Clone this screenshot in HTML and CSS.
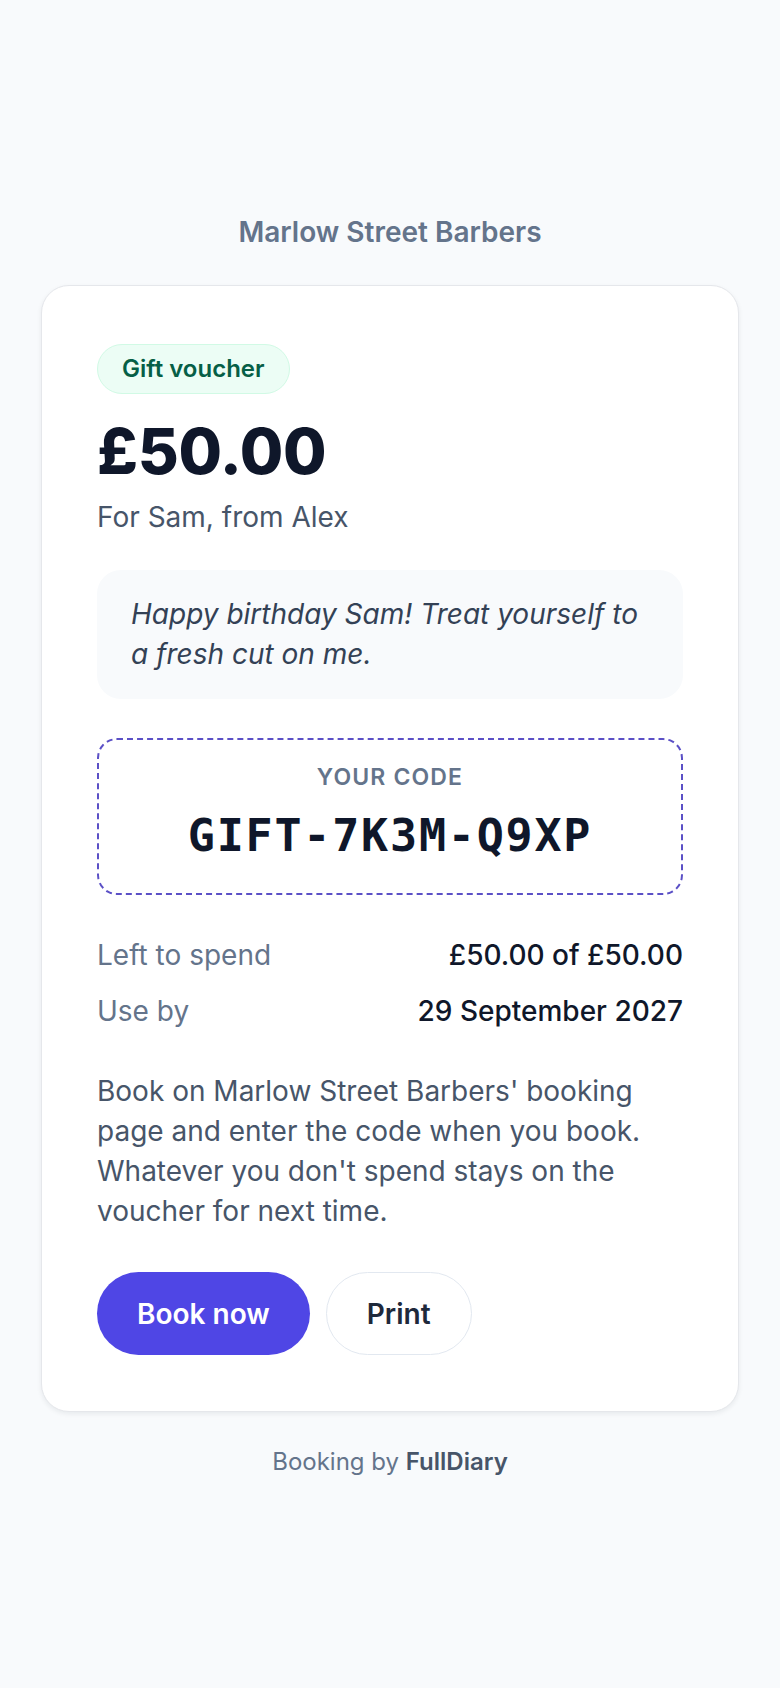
FILE: index.html
```html
<!DOCTYPE html>
<html lang="en">
<head>
<meta charset="utf-8">
<meta name="viewport" content="width=device-width, initial-scale=1">
<title>Gift voucher – Marlow Street Barbers</title>
<link rel="stylesheet" href="styles.css">
</head>
<body>
<main class="page">
  <header class="shop-name">Marlow Street Barbers</header>
  <section class="card">
    <span class="pill">Gift voucher</span>
    <h1 class="amount">£50.00</h1>
    <p class="for">For Sam, from Alex</p>
    <blockquote class="message">Happy birthday Sam! Treat yourself to a fresh cut on me.</blockquote>
    <div class="code-box">
      <div class="code-label">YOUR CODE</div>
      <div class="code">GIFT-7K3M-Q9XP</div>
    </div>
    <dl class="details">
      <div class="row"><dt>Left to spend</dt><dd>£50.00 of £50.00</dd></div>
      <div class="row"><dt>Use by</dt><dd>29 September 2027</dd></div>
    </dl>
    <p class="info">Book on Marlow Street Barbers' booking page and enter the code when you book. Whatever you don't spend stays on the voucher for next time.</p>
    <div class="actions">
      <a class="btn btn-primary" href="#">Book now</a>
      <a class="btn btn-secondary" href="#">Print</a>
    </div>
  </section>
  <footer class="footer">Booking by <strong>FullDiary</strong></footer>
</main>
</body>
</html>
```
FILE: styles.css
```css
* { box-sizing: border-box; }
html, body { margin: 0; padding: 0; }
body {
  background: #f8fafc;
  font-family: Inter, "Noto Sans", "Liberation Sans", sans-serif;
  color: #0f172a;
  -webkit-font-smoothing: antialiased;
}
.page {
  padding: 212px 41px 60px;
  display: flex;
  flex-direction: column;
}
.shop-name {
  text-align: center;
  font-size: 28px;
  line-height: 40px;
  font-weight: 600;
  color: #64748b;
  margin-bottom: 33px;
}
.card {
  background: #ffffff;
  border: 1.5px solid #e5e7eb;
  border-radius: 28px;
  box-shadow: 0 2px 5px rgba(15, 23, 42, 0.07);
  padding: 58px 55px 56px;
  display: flex;
  flex-direction: column;
  align-items: flex-start;
}
.pill {
  display: inline-block;
  background: #ecfdf5;
  border: 1.5px solid #d1fae5;
  color: #065f46;
  font-size: 24px;
  line-height: 30px;
  font-weight: 600;
  padding: 9px 24px;
  border-radius: 999px;
}
.amount {
  margin: 27px 0 0;
  font-size: 63px;
  line-height: 60px;
  font-weight: 800;
  letter-spacing: -0.005em;
  color: #0f172a;
}
.for {
  margin: 18px 0 0;
  font-size: 28px;
  line-height: 36px;
  color: #475569;
}
.message {
  align-self: stretch;
  margin: 35px 0 0;
  background: #f8fafc;
  border-radius: 24px;
  padding: 24px 34px 25px;
  font-style: italic;
  font-size: 28px;
  line-height: 40px;
  color: #334155;
}
.code-box {
  align-self: stretch;
  margin-top: 39px;
  border: 2px dashed #5b50c6;
  border-radius: 20px;
  padding: 22px 16px 30px;
  text-align: center;
}
.code-label {
  font-size: 23px;
  line-height: 31px;
  font-weight: 600;
  letter-spacing: 0.05em;
  color: #64748b;
}
.code {
  margin-top: 16px;
  font-family: "DejaVu Sans Mono", "Liberation Mono", monospace;
  font-size: 45px;
  line-height: 54px;
  font-weight: 700;
  letter-spacing: 0.04em;
  color: #0f172a;
}
.details {
  align-self: stretch;
  margin: 42px 0 0;
  display: flex;
  flex-direction: column;
  gap: 20px;
}
.row {
  display: flex;
  justify-content: space-between;
  font-size: 28px;
  line-height: 36px;
}
.row dt { color: #64748b; }
.row dd { margin: 0; color: #0f172a; font-weight: 500; }
.info {
  margin: 42px 0 0;
  font-size: 28px;
  line-height: 40px;
  color: #475569;
}
.actions {
  margin-top: 41px;
  display: flex;
  gap: 16px;
}
.btn {
  display: inline-flex;
  align-items: center;
  justify-content: center;
  height: 83px;
  padding: 0 40px;
  border-radius: 999px;
  font-size: 28px;
  font-weight: 600;
  text-decoration: none;
}
.btn-primary { background: #4f46e5; color: #ffffff; }
.btn-secondary { background: #ffffff; color: #1e293b; border: 1.5px solid #e2e8f0; }
.footer {
  margin-top: 34px;
  text-align: center;
  font-size: 24px;
  line-height: 32px;
  color: #64748b;
}
.footer strong { font-weight: 600; color: #475569; }
```
